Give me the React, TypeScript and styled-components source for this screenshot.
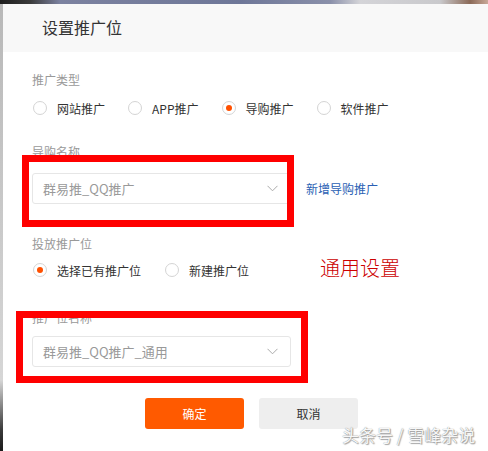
import React from 'react'
import styled, { createGlobalStyle } from 'styled-components'

const GlobalStyle = createGlobalStyle`
  html, body {
    margin: 0;
    padding: 0;
    width: 488px;
    height: 451px;
    overflow: hidden;
    background: #ffffff;
  }
  body {
    font-family: "Noto Sans CJK SC", "Noto Sans", "Liberation Sans", sans-serif;
  }
`

const Backdrop = styled.div`
  position: relative;
  width: 488px;
  height: 451px;
  overflow: hidden;
  padding: 4px 0 0 3px;
  box-sizing: border-box;
  background:
    linear-gradient(90deg, #1e1e1e 0px, #3a3a3a 30px, #7c82a0 60px, #6e7798 240px, #8a90aa 330px, #d4d4d8 360px, #c9c9cc 440px, #8b6a58 470px, #c8a898 488px) top / 100% 4px no-repeat,
    linear-gradient(180deg, #b8b8b8 0px, #d6d6d6 380px, #3a3a3a 430px, #1a1a1a 451px) left / 3px 100% no-repeat;
`

const Dialog = styled.div`
  width: 540px;
  height: 100%;
  background: #ffffff;
  display: flex;
  flex-direction: column;
`

const Header = styled.div`
  height: 48px;
  background: #f8f8f8;
  display: flex;
  align-items: center;
  padding-left: 39px;
  font-size: 16px;
  color: #333;
  padding-bottom: 2px;
  box-sizing: border-box;
`

const Body = styled.div`
  padding: 0 0 0 29px;
  display: flex;
  flex-direction: column;
`

const Label = styled.div<{ $top: number }>`
  margin-top: ${p => p.$top}px;
  height: 18px;
  line-height: 18px;
  font-size: 12px;
  color: #999;
`

const RadioRow = styled.div<{ $top: number; $gap: number }>`
  margin-top: ${p => p.$top}px;
  height: 20px;
  display: flex;
  align-items: center;
  gap: ${p => p.$gap}px;
`

const RadioItem = styled.label`
  display: flex;
  align-items: center;
  gap: 10px;
  font-size: 12px;
  color: #333;
  white-space: nowrap;
`

const RadioCircle = styled.span<{ $checked?: boolean }>`
  width: 14px;
  height: 14px;
  margin-left: 1px;
  border: 1px solid #d4d4d4;
  border-radius: 50%;
  box-sizing: border-box;
  display: flex;
  align-items: center;
  justify-content: center;

  &::after {
    content: '';
    width: 6px;
    height: 6px;
    border-radius: 50%;
    background: ${p => (p.$checked ? '#ff5000' : 'transparent')};
  }
`

const FieldRow = styled.div<{ $top: number }>`
  margin-top: ${p => p.$top}px;
  display: flex;
  align-items: center;
  gap: 15px;
`

const Select = styled.div`
  width: 259px;
  height: 31px;
  border: 1px solid #e6e6e6;
  border-radius: 3px;
  box-sizing: border-box;
  padding: 0 12px 0 10px;
  display: flex;
  align-items: center;
  justify-content: space-between;
  font-size: 13px;
  color: #999;
`

const Link = styled.a`
  font-size: 12px;
  color: #2b5fb4;
  text-decoration: none;
`

const Footer = styled.div`
  margin-top: 31px;
  padding-left: 113px;
  display: flex;
  gap: 15px;
`

const Button = styled.button<{ $primary?: boolean }>`
  width: 99px;
  height: 31px;
  border: none;
  border-radius: 3px;
  font-family: inherit;
  font-size: 12px;
  background: ${p => (p.$primary ? '#ff5a00' : '#eeeeee')};
  color: ${p => (p.$primary ? '#ffffff' : '#333333')};
  cursor: pointer;
`

const RedBox = styled.div<{ $left: number; $top: number; $w: number; $h: number }>`
  position: absolute;
  left: ${p => p.$left}px;
  top: ${p => p.$top}px;
  width: ${p => p.$w}px;
  height: ${p => p.$h}px;
  border: 7px solid #ff0000;
  box-sizing: border-box;
  pointer-events: none;
`

const Note = styled.div`
  position: absolute;
  left: 320px;
  top: 255px;
  font-size: 20px;
  line-height: 26px;
  color: #cc0000;
  font-family: "Noto Sans CJK SC", sans-serif;
  font-weight: 300;
`

const Watermark = styled.div`
  position: absolute;
  left: 342px;
  top: 423px;
  font-size: 17px;
  line-height: 24px;
  color: rgba(255, 255, 255, 0.95);
  text-shadow: 0 0 1px #777, 1px 1px 1px rgba(0, 0, 0, 0.35);
  white-space: nowrap;
`

const Chevron = () => (
  <svg width="11" height="7" viewBox="0 0 11 7">
    <path d="M0.5 0.8 L5.5 5.8 L10.5 0.8" fill="none" stroke="#aaa" strokeWidth="1" />
  </svg>
)

const Radio: React.FC<{ label: string; checked?: boolean }> = ({ label, checked }) => (
  <RadioItem>
    <RadioCircle $checked={checked} />
    {label}
  </RadioItem>
)

const App: React.FC = () => {
  const types = [
    { label: '网站推广' },
    { label: 'APP推广' },
    { label: '导购推广', checked: true },
    { label: '软件推广' }
  ]

  return (
    <>
      <GlobalStyle />
      <Backdrop>
        <Dialog>
          <Header>设置推广位</Header>
          <Body>
            <Label $top={19}>推广类型</Label>
            <RadioRow $top={9} $gap={22}>
              {types.map((t, i) => (
                <Radio key={i} label={t.label} checked={t.checked} />
              ))}
            </RadioRow>
            <Label $top={25}>导购名称</Label>
            <FieldRow $top={12}>
              <Select>
                群易推_QQ推广
                <Chevron />
              </Select>
              <Link href="#">新增导购推广</Link>
            </FieldRow>
            <Label $top={31}>投放推广位</Label>
            <RadioRow $top={7} $gap={23}>
              <Radio label="选择已有推广位" checked />
              <Radio label="新建推广位" />
            </RadioRow>
            <Label $top={29}>推广位名称</Label>
            <FieldRow $top={9}>
              <Select>
                群易推_QQ推广_通用
                <Chevron />
              </Select>
            </FieldRow>
            <Footer>
              <Button $primary>确定</Button>
              <Button>取消</Button>
            </Footer>
          </Body>
        </Dialog>
        <RedBox $left={22} $top={155} $w={272} $h={72} />
        <RedBox $left={16} $top={311} $w={292} $h={72} />
        <Note>通用设置</Note>
        <Watermark>头条号 / 雪峰杂说</Watermark>
      </Backdrop>
    </>
  )
}

export default App
